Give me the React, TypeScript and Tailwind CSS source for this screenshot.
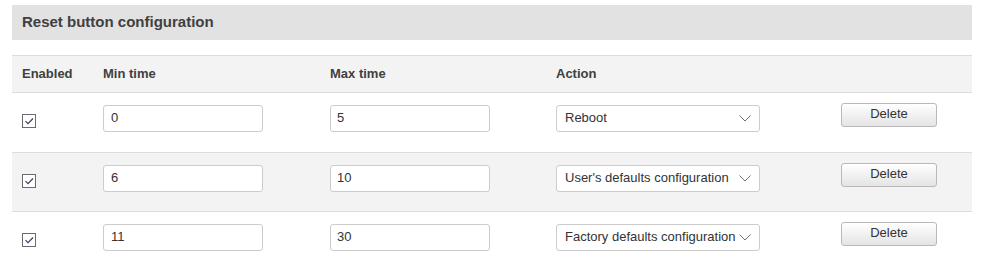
import React from "react";

const rows = [
  { min: "0", max: "5", action: "Reboot" },
  { min: "6", max: "10", action: "User's defaults configuration" },
  { min: "11", max: "30", action: "Factory defaults configuration" },
];

function Check() {
  return (
    <div className="w-[14px] h-[14px] border border-[#6a6a6a] bg-white flex items-center justify-center">
      <svg width="12" height="12" viewBox="0 0 12 12">
        <path d="M2.5 6.2 L5 8.7 L10 3.5" fill="none" stroke="#33435e" strokeWidth="1.2" />
      </svg>
    </div>
  );
}

function Chevron() {
  return (
    <svg width="12" height="7" viewBox="0 0 12 7">
      <path d="M0.5 0.5 L6 6 L11.5 0.5" fill="none" stroke="#6f6f6f" strokeWidth="1" />
    </svg>
  );
}

export default function App() {
  return (
    <div
      className="w-[994px] h-[265px] bg-white px-[12px] pt-[5px] overflow-hidden text-[13px] text-[#333]"
      style={{ fontFamily: '"Liberation Sans", Arial, sans-serif' }}
    >
      <div className="h-[35px] bg-[#e2e2e2] flex items-center pl-[10px] text-[15px] font-bold text-[#404040] w-[960px]">
        Reset button configuration
      </div>
      <div className="mt-[15px] w-[960px]">
        <div className="grid grid-cols-[81px_227px_226px_285px_141px] h-[38px] bg-[#f3f3f3] border-t border-b border-[#dcdcdc] items-center font-bold text-[#404040]">
          <div className="pl-[10px]">Enabled</div>
          <div className="pl-[10px]">Min time</div>
          <div className="pl-[10px]">Max time</div>
          <div className="pl-[10px]">Action</div>
          <div></div>
        </div>
        {rows.map((r, i) => (
          <div
            key={i}
            className={`grid grid-cols-[81px_227px_226px_285px_141px] border-b border-[#dcdcdc] items-start ${
              i === 1 ? "bg-[#f3f3f3] h-[59px]" : "bg-white h-[60px]"
            }`}
          >
            <div className="pl-[10px] pt-[21px]">
              <Check />
            </div>
            <div className="pl-[10px] pt-[12px]">
              <div className="w-[160px] h-[27px] border border-[#cccccc] rounded-[3px] bg-white flex items-center pl-[7px] pb-[1px]">
                {r.min}
              </div>
            </div>
            <div className="pl-[10px] pt-[12px]">
              <div className="w-[160px] h-[27px] border border-[#cccccc] rounded-[3px] bg-white flex items-center pl-[6px] pb-[1px]">
                {r.max}
              </div>
            </div>
            <div className="pl-[10px] pt-[12px]">
              <div className="w-[204px] h-[27px] border border-[#cccccc] rounded-[3px] bg-white flex items-center pl-[8px] pr-[8px] justify-between">
                <span className="whitespace-nowrap pb-[1px]">{r.action}</span>
                <Chevron />
              </div>
            </div>
            <div className="pl-[10px] pt-[10px]">
              <div className="w-[96px] h-[24px] border border-[#b9b9b9] rounded-[3px] bg-gradient-to-b from-[#ffffff] to-[#e4e4e4] flex items-center justify-center pb-[2px] text-[#333]">
                Delete
              </div>
            </div>
          </div>
        ))}
      </div>
    </div>
  );
}
